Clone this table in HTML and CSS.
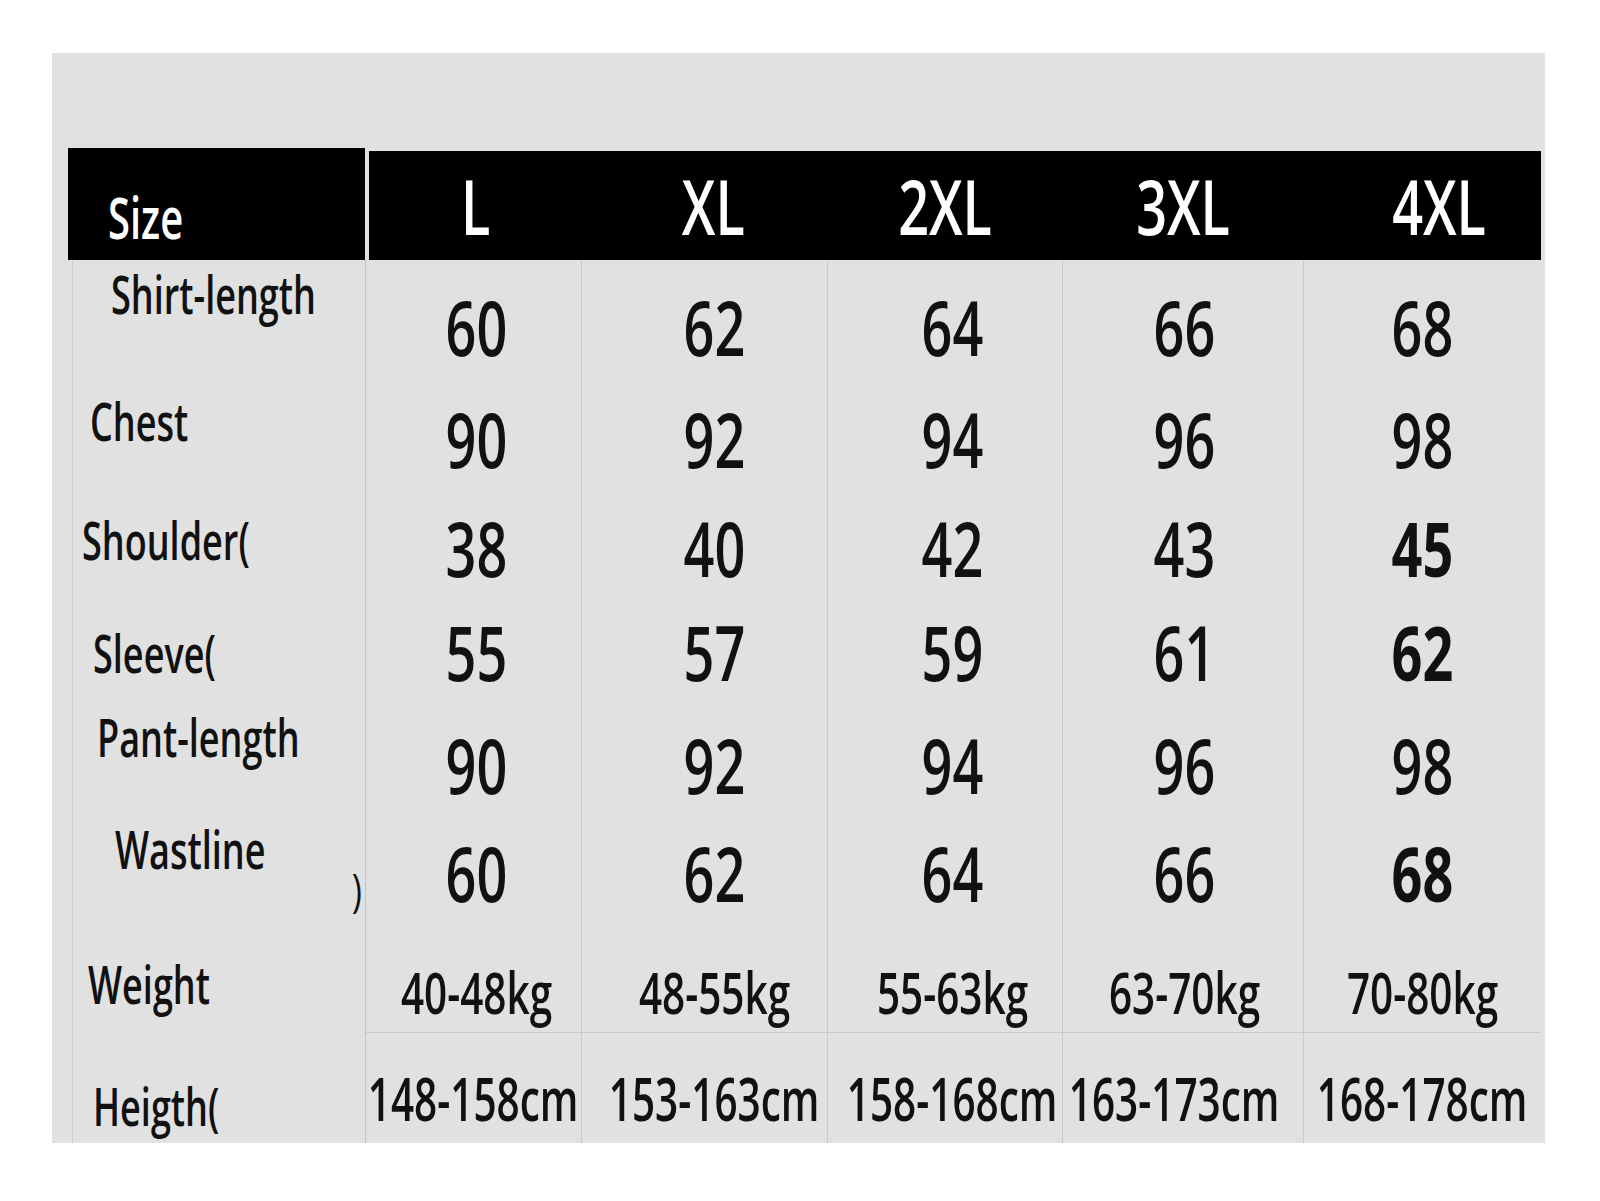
FILE: index.html
```html
<!DOCTYPE html>
<html lang="en">
<head>
<meta charset="utf-8">
<title>Size chart</title>
<link rel="stylesheet" href="styles.css">
</head>
<body>
<div class="sheet">
  <div class="top">
    <div class="top-a"></div>
    <div class="top-b"></div>
  </div>
  <div class="head">
    <div class="head-label"><span class="t size">Size</span></div>
    <div class="head-bar">
      <div class="hc h1"><span class="t hs">L</span></div>
      <div class="hc h2"><span class="t hs">XL</span></div>
      <div class="hc h3"><span class="t hs">2XL</span></div>
      <div class="hc h4"><span class="t hs">3XL</span></div>
      <div class="hc h5"><span class="t hs">4XL</span></div>
    </div>
  </div>
  <div class="body">
    <div class="row r1">
      <div class="lab"><span class="t lt">Shirt-length</span></div>
      <div class="val c1"><span class="t num">60</span></div>
      <div class="val c2"><span class="t num">62</span></div>
      <div class="val c3"><span class="t num">64</span></div>
      <div class="val c4"><span class="t num">66</span></div>
      <div class="val c5"><span class="t num">68</span></div>
    </div>
    <div class="row r2">
      <div class="lab"><span class="t lt">Chest</span></div>
      <div class="val c1"><span class="t num">90</span></div>
      <div class="val c2"><span class="t num">92</span></div>
      <div class="val c3"><span class="t num">94</span></div>
      <div class="val c4"><span class="t num">96</span></div>
      <div class="val c5"><span class="t num">98</span></div>
    </div>
    <div class="row r3">
      <div class="lab"><span class="t lt">Shoulder(</span></div>
      <div class="val c1"><span class="t num">38</span></div>
      <div class="val c2"><span class="t num">40</span></div>
      <div class="val c3"><span class="t num">42</span></div>
      <div class="val c4"><span class="t num">43</span></div>
      <div class="val c5"><span class="t num bold">45</span></div>
    </div>
    <div class="row r4">
      <div class="lab"><span class="t lt">Sleeve(</span></div>
      <div class="val c1"><span class="t num">55</span></div>
      <div class="val c2"><span class="t num">57</span></div>
      <div class="val c3"><span class="t num">59</span></div>
      <div class="val c4"><span class="t num">61</span></div>
      <div class="val c5"><span class="t num bold">62</span></div>
    </div>
    <div class="row r5">
      <div class="lab"><span class="t lt">Pant-length</span></div>
      <div class="val c1"><span class="t num">90</span></div>
      <div class="val c2"><span class="t num">92</span></div>
      <div class="val c3"><span class="t num">94</span></div>
      <div class="val c4"><span class="t num">96</span></div>
      <div class="val c5"><span class="t num">98</span></div>
    </div>
    <div class="row r6">
      <div class="lab"><span class="t lt">Wastline</span><span class="paren">)</span></div>
      <div class="val c1"><span class="t num">60</span></div>
      <div class="val c2"><span class="t num">62</span></div>
      <div class="val c3"><span class="t num">64</span></div>
      <div class="val c4"><span class="t num">66</span></div>
      <div class="val c5"><span class="t num bold">68</span></div>
    </div>
    <div class="row r7">
      <div class="lab"><span class="t lt">Weight</span></div>
      <div class="val c1"><span class="t kg">40-48kg</span></div>
      <div class="val c2"><span class="t kg">48-55kg</span></div>
      <div class="val c3"><span class="t kg">55-63kg</span></div>
      <div class="val c4"><span class="t kg">63-70kg</span></div>
      <div class="val c5"><span class="t kg">70-80kg</span></div>
    </div>
    <div class="row r8">
      <div class="lab"><span class="t lt">Heigth(</span></div>
      <div class="val c1"><span class="t cm">148-158cm</span></div>
      <div class="val c2"><span class="t cm">153-163cm</span></div>
      <div class="val c3"><span class="t cm">158-168cm</span></div>
      <div class="val c4"><span class="t cm">163-173cm</span></div>
      <div class="val c5"><span class="t cm">168-178cm</span></div>
    </div>
  </div>
</div>
</body>
</html>
```
FILE: styles.css
```css
* { box-sizing: border-box; }

body {
  margin: 0;
  background: #ffffff;
  font-family: "Open Sans", "Noto Sans", "DejaVu Sans", sans-serif;
  font-weight: 600;
  color: #111111;
}

.sheet {
  margin: 53px 0 0 52px;
  width: 1493px;
  height: 1090px;
  background: #e1e1e1;
  display: flex;
  flex-direction: column;
}

/* faint frame lines above the header */
.top {
  height: 95px;
  display: flex;
}
.top-a {
  width: 12px;
  border-right: 1px solid #dedede;
}
.top-b {
  width: 304px;
  border-right: 1px solid #dddddd;
}

/* text base: condensed look */
.t {
  display: inline-block;
  line-height: 1;
  white-space: nowrap;
}

/* header */
.head {
  display: flex;
  align-items: flex-end;
  height: 112px;
  margin-left: 16px;
  width: 1473px;
}
.head-label {
  width: 297px;
  height: 112px;
  background: #000000;
  padding: 41px 0 0 40px;
}
.size {
  color: #ffffff;
  font-size: 57px;
  transform: scaleX(0.7);
  transform-origin: left center;
}
.head-bar {
  margin-left: 4px;
  height: 109px;
  flex: 1;
  background: #000000;
  display: flex;
}
.hc {
  display: flex;
  align-items: center;
  justify-content: center;
}
.h1 { width: 213px; }
.h2 { width: 246px; padding-left: 16px; }
.h3 { width: 235px; }
.h4 { width: 241px; }
.h5 { width: 237px; padding-left: 34px; }
.hs {
  color: #ffffff;
  font-size: 76px;
  transform: scaleX(0.71);
}

/* body rows */
.body {
  margin-left: 20px;
  width: 1469px;
}
.row {
  display: grid;
  grid-template-columns: 294px 216px 246px 235px 241px 237px;
}
.r1 { height: 124px; }
.r2 { height: 110px; }
.r3 { height: 107px; }
.r4 { height: 109px; }
.r5 { height: 110px; }
.r6 { height: 115px; }
.r7 { height: 98px; }
.r8 { height: 110px; }

.lab {
  display: flex;
  align-items: flex-start;
  border-left: 1px solid #cdcdcd;
  border-right: 1px solid #c4c4c4;
}
.lt {
  font-size: 53px;
  transform: scaleX(0.68);
  transform-origin: left center;
}
.r1 .lab { padding: 7px 0 0 38px; }
.r2 .lab { padding: 10px 0 0 17px; }
.r3 .lab { padding: 19px 0 0 9px; }
.r4 .lab { padding: 25px 0 0 20px; }
.r5 .lab { padding: 0 0 0 24px; }
.r6 .lab { padding: 2px 0 0 42px; }
.r7 .lab { padding: 22px 0 0 15px; }
.r8 .lab { padding: 46px 0 0 20px; }

.paren {
  margin-left: auto;
  margin-right: 1px;
  margin-top: 44px;
  font-size: 46px;
  font-weight: 400;
  line-height: 1;
  transform: scaleX(0.75);
}

.val {
  display: flex;
  align-items: center;
  justify-content: center;
  border-right: 1px solid #c9c9c9;
}
.val.c5 { border-right: none; }
.c1 { padding-left: 6px; }
.c2 { padding-left: 20px; }
.c3 { padding-left: 14px; }
.c4 { padding-left: 2px; }

.r1 .val { padding-top: 10px; }
.r4 .val { padding-bottom: 7px; }
.r6 .val { padding-bottom: 9px; }
.r7 .val { padding-top: 18px; border-bottom: 1px solid #c9c9c9; }
.r8 .val { padding-top: 20px; }
.r8 .val.c1 { padding-left: 0; }
.r8 .val.c4 { padding-left: 0; padding-right: 18px; }

.num {
  font-size: 76px;
  transform: scaleX(0.71);
}
.num.bold { font-weight: 700; }
.kg {
  font-size: 57px;
  transform: scaleX(0.71);
}
.cm {
  font-size: 60px;
  transform: scaleX(0.675);
}
```
